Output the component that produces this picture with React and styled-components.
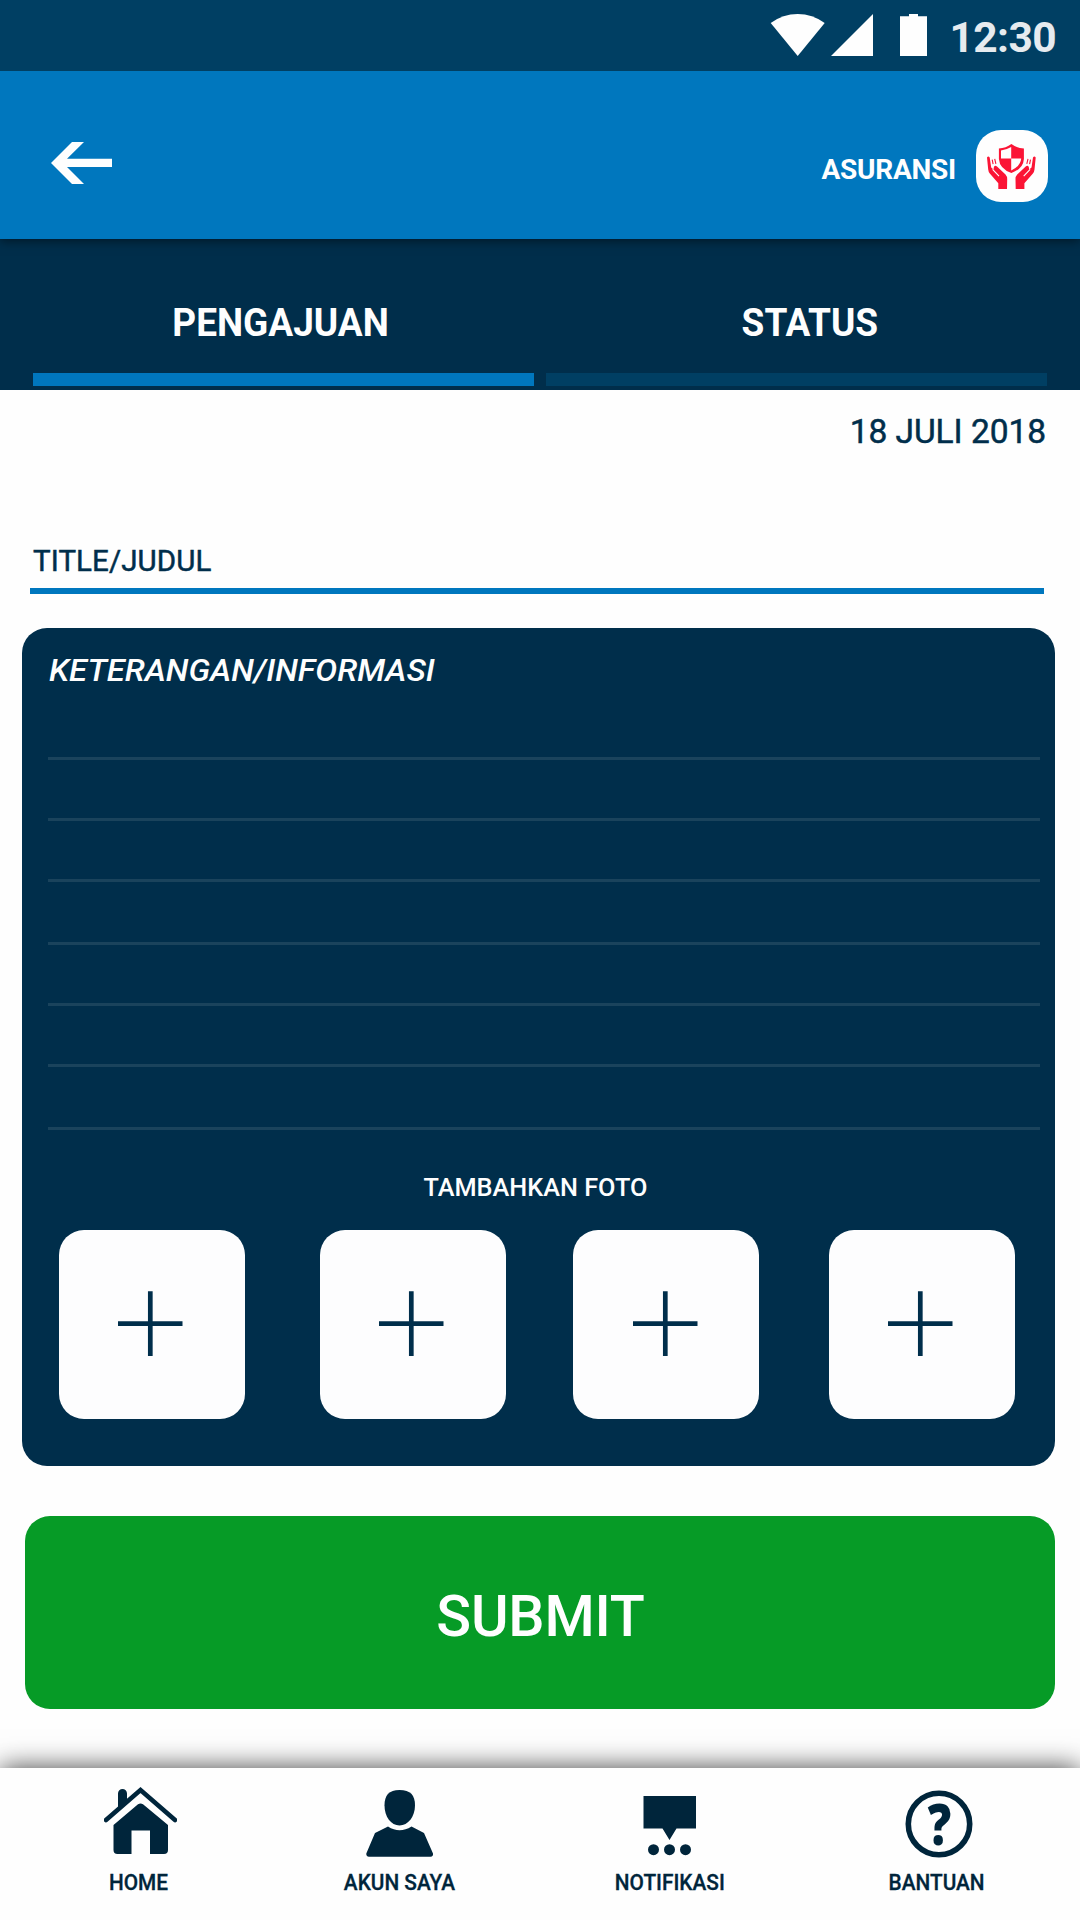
import React from "react";
import styled, { createGlobalStyle } from "styled-components";

const navy = "#002e4b";
const blue = "#0077be";
const deep = "#003f63";
const ink = "#00253b";

const GlobalStyle = createGlobalStyle`
  * { box-sizing: border-box; }
  body { margin: 0; background: #fefefe; font-family: Roboto, "Liberation Sans", sans-serif; }
  button { font: inherit; border: 0; padding: 0; margin: 0; background: none; color: inherit; }
`;

const Screen = styled.div`
  width: 1080px;
  height: 1920px;
  display: flex;
  flex-direction: column;
  overflow: hidden;
  background: #fefefe;
`;

const Label = styled.span`
  display: block;
  white-space: nowrap;
  line-height: 1;
  font-size: ${(p) => p.$size}px;
  font-weight: ${(p) => p.$weight || 500};
  font-style: ${(p) => (p.$italic ? "italic" : "normal")};
  letter-spacing: ${(p) => p.$track || 0}px;
  color: ${(p) => p.$color || "#fefefe"};
  ${(p) => p.$stretch && `transform: scaleX(${p.$stretch});`}
  ${(p) => p.$stroke && `-webkit-text-stroke: ${p.$stroke}px currentColor;`}
`;

const StatusBar = styled.header`
  flex: none;
  position: relative;
  z-index: 1;
  height: 71px;
  display: flex;
  align-items: flex-start;
  justify-content: flex-end;
  padding: 14px 24px 0 0;
  background: ${deep};
`;

const StatusIcons = styled.svg`
  flex: none;
  margin-right: 21px;
`;

const Clock = styled(Label)`
  margin-top: 3px;
`;

const AppBar = styled.div`
  flex: none;
  position: relative;
  height: 168px;
  display: flex;
  align-items: flex-start;
  padding: 59px 32px 0 51px;
  background: ${blue};
  box-shadow: 0 2px 10px rgba(0, 0, 0, 0.5);
`;

const BackButton = styled.button`
  margin: 12px auto 0 0;
  height: 42px;
`;

const Section = styled.div`
  display: flex;
  align-items: center;
  gap: 20px;
  height: 72px;
`;

const SectionName = styled(Label)`
  margin-top: 8px;
`;

const Badge = styled.div`
  width: 72px;
  height: 72px;
  border-radius: 25px;
  background: #fefefe;
`;

const Tabs = styled.nav`
  flex: none;
  height: 151px;
  display: flex;
  gap: 12px;
  padding: 0 33px 4px;
  background: ${navy};
`;

const Tab = styled.button`
  flex: none;
  width: 501px;
  display: flex;
  flex-direction: column;
  align-items: center;
  justify-content: flex-end;
  padding: 0 ${(p) => p.$right || 0}px 31px ${(p) => p.$left || 0}px;
  border-bottom: 13px solid ${(p) => (p.$active ? blue : deep)};
`;

const Form = styled.main`
  flex: 1;
  display: flex;
  flex-direction: column;
  padding: 0 25px 0 22px;
`;

const DateRow = styled.div`
  height: 81px;
  display: flex;
  align-items: center;
  justify-content: flex-end;
  padding: 2px 9px 0 0;
`;

const TitleField = styled.div`
  height: 79px;
  margin: 44px 11px 34px 8px;
  display: flex;
  align-items: flex-end;
  padding: 0 0 12px 3px;
  border-bottom: 6px solid ${blue};
`;

const Panel = styled.section`
  height: 838px;
  display: flex;
  flex-direction: column;
  padding: 27px 15px 0 26px;
  border-radius: 25px;
  background: ${navy};
`;

const PanelTitle = styled(Label)`
  align-self: flex-start;
  margin-left: 1px;
  transform-origin: left center;
`;

const Lines = styled.div`
  height: 373px;
  margin-top: 71px;
`;

const Line = styled.div`
  height: 3px;
  margin-bottom: 58px;
  background: #1a435c;

  &:nth-child(3n) {
    margin-bottom: 60px;
  }
`;

const PhotoTitle = styled.div`
  margin-top: 42px;
  height: 30px;
  display: flex;
  align-items: center;
  justify-content: center;
  padding-right: 17px;
`;

const Photos = styled.div`
  display: grid;
  grid-template-columns: 261.2px 253.2px 255.6px 186px;
  margin: 28.3px 0 0 11px;
`;

const PhotoTile = styled.button`
  width: 186px;
  height: 188.5px;
  padding: 60.7px 0 0 59.2px;
  border-radius: 25px;
  background: #fdfdfe;
  display: flex;
`;

const Submit = styled.button`
  height: 193px;
  margin: 50px 0 0 3px;
  display: flex;
  align-items: center;
  justify-content: center;
  padding: 9px 0 0 1px;
  border-radius: 25px;
  background: #069b26;
`;

const BottomNav = styled.nav`
  flex: none;
  height: 152px;
  display: grid;
  grid-template-columns: 260.5px 270.5px 267px 120px;
  padding: 18px 0 0 79px;
  background: #fefefe;
  box-shadow: 0 0 26px rgba(0, 0, 0, 0.75);
`;

const NavItem = styled.button`
  width: 120px;
  height: 107px;
  display: flex;
  flex-direction: column;
  align-items: center;
  justify-content: space-between;
`;

function Plus() {
  return (
    <svg width="65" height="65" viewBox="0 0 65 65" stroke={navy} strokeWidth="4.7">
      <path d="M32.3 0.3V64.9M0 32.7H64.5" />
    </svg>
  );
}

function InsuranceIcon() {
  const hand = (
    <>
      <path d="M11 27.600Q12.300 25.300 13.700 27.600L15.200 37.500L17.500 39.500L17.900 37Q18.900 34.800 21 36.400L29.500 44.500Q31.300 46.500 31.200 49L31 59H22.300V53.300L13.800 43.500Q12.400 41.700 12.200 39.500z" fill="#fb1435" />
      <path d="M16.600 39.300L23 46.200" stroke="#fefefe" strokeWidth="1.100" fill="none" />
      <path d="M16.200 29.600l.9 4.600M18.700 28.800l1.200 5" stroke="#fb1435" strokeWidth="1.100" fill="none" />
    </>
  );
  return (
    <svg width="72" height="72" viewBox="0 0 72 72">
      <path d="M35.4 14q5.500 4.100 12.500 4.500V29q-.7 9.800-12.500 14Q23.600 38.800 22.900 29V18.500Q29.900 18.100 35.400 14z" fill="#fb1435" />
      <path d="M35.200 17v11.500H25V20.400q5.600-.6 10.200-3.400zM35.200 28.500h10q-.6 7.600-10 12z" fill="#fefefe" />
      {hand}
      <g transform="translate(70.7 0) scale(-1 1)">{hand}</g>
    </svg>
  );
}

function HomeIcon() {
  return (
    <svg width="73" height="69" viewBox="104 1786 73 69" fill={ink}>
      <path d="M106 1820L140.500 1790L175 1820" fill="none" stroke={ink} strokeWidth="4.600" strokeLinecap="round" />
      <path d="M118 1809V1793.500a4.500 4.500 0 0 1 9 0V1801z" />
      <path d="M113.500 1825L138 1804.300q2.500-1.800 5 0L168 1825V1850q0 4-4 4H150V1830.500H131.500V1854H117.500q-4 0-4-4z" />
    </svg>
  );
}

function PersonIcon() {
  return (
    <svg width="68" height="69" viewBox="366 1789 68 69" fill={ink}>
      <path d="M399.500 1790c11 0 15.500 5 15.500 15.500c0 11-7 20-15.500 20s-15-9-15-20c0-10.500 4.500-15.500 15-15.500z" />
      <path d="M388 1826.500q11.500 7.500 23.500 0l12.500 6.500 9 20.500q.5 3-2.500 3.300H369q-3-.3-2.700-3.300l8.700-20.500z" />
    </svg>
  );
}

function MessageIcon() {
  return (
    <svg width="54" height="62" viewBox="643 1795 54 62" fill={ink}>
      <path d="M643.500 1796H696v32.500H676.500L669.500 1840 662.500 1828.500H643.500z" />
      <circle cx="653.500" cy="1849.700" r="5.500" />
      <circle cx="669.500" cy="1849.700" r="5.500" />
      <circle cx="685.500" cy="1849.700" r="5.500" />
    </svg>
  );
}

const HelpSvg = styled.svg`
  overflow: visible;
  text {
    font-family: "Open Sans", "Noto Sans", sans-serif;
    font-weight: 800;
    font-size: 56px;
    text-anchor: middle;
  }
`;

function HelpIcon() {
  return (
    <HelpSvg width="68" height="68" viewBox="0 0 68 68" fill={ink}>
      <circle cx="34" cy="34" r="30.700" fill="none" stroke={ink} strokeWidth="5.600" />
      <text transform="translate(34.500 54.500) scale(0.830 1)">?</text>
    </HelpSvg>
  );
}

const IconSlot = styled.div`
  display: flex;
  height: 72px;
  align-items: flex-end;
  padding-bottom: ${(p) => p.$lift || 0}px;
  margin-left: ${(p) => p.$nudge || 0}px;
`;

const navItems = [
  { name: "HOME", Icon: HomeIcon, lift: 3, nudge: 3 },
  { name: "AKUN SAYA", Icon: PersonIcon, lift: 0, nudge: 0 },
  { name: "NOTIFIKASI", Icon: MessageIcon, lift: 1, nudge: 0 },
  { name: "BANTUAN", Icon: HelpIcon, lift: 0, nudge: 3 },
];

export default function App() {
  return (
    <>
      <GlobalStyle />
      <Screen>
        <StatusBar>
          <StatusIcons width="158" height="42" viewBox="770 14 158 42" fill="#fefefe">
            <path d="M797.700 56L770.700 23Q783 14 797.700 14T824.700 23z" />
            <path d="M873 14V56H831z" />
            <path d="M900 16.300H909V14H918V16.300H927V56H900z" />
          </StatusIcons>
          <Clock $size={42.500} $weight={700} $track={-0.6} $color="#e6ebef">12:30</Clock>
        </StatusBar>
        <AppBar>
          <BackButton aria-label="Back">
            <svg width="61" height="42" viewBox="0 0 61 42" fill="#fefefe">
              <path d="M0 21L21 0H33L16 16.800H61V25H16L33 42H21z" />
            </svg>
          </BackButton>
          <Section>
            <SectionName $size={28} $weight={700} $track={-0.25}>ASURANSI</SectionName>
            <Badge><InsuranceIcon /></Badge>
          </Section>
        </AppBar>
        <Tabs>
          <Tab $active $right={6}><Label $size={39.500} $weight={700} $stretch={0.937}>PENGAJUAN</Label></Tab>
          <Tab $left={27}><Label $size={39.500} $weight={700} $stretch={0.937}>STATUS</Label></Tab>
        </Tabs>
        <Form>
          <DateRow><Label $size={33.500} $weight={400} $stroke={0.5} $track={-0.05} $color={navy}>18 JULI 2018</Label></DateRow>
          <TitleField><Label $size={29.500} $weight={400} $stroke={0.5} $track={0.1} $color={navy}>TITLE/JUDUL</Label></TitleField>
          <Panel>
            <PanelTitle $size={31} $italic $stretch={1.058}>KETERANGAN/INFORMASI</PanelTitle>
            <Lines>
              {[0, 1, 2, 3, 4, 5, 6].map((n) => <Line key={n} />)}
            </Lines>
            <PhotoTitle><Label $size={26.500} $stretch={0.954}>TAMBAHKAN FOTO</Label></PhotoTitle>
            <Photos>
              {[0, 1, 2, 3].map((n) => (
                <PhotoTile key={n} aria-label="Tambahkan foto"><Plus /></PhotoTile>
              ))}
            </Photos>
          </Panel>
          <Submit><Label $size={57.500} $track={-0.2}>SUBMIT</Label></Submit>
        </Form>
        <BottomNav>
          {navItems.map(({ name, Icon, lift, nudge }) => (
            <NavItem key={name}>
              <IconSlot $lift={lift} $nudge={nudge}><Icon /></IconSlot>
              <Label $size={21.500} $stretch={0.968} $stroke={0.3} $color={ink}>{name}</Label>
            </NavItem>
          ))}
        </BottomNav>
      </Screen>
    </>
  );
}
